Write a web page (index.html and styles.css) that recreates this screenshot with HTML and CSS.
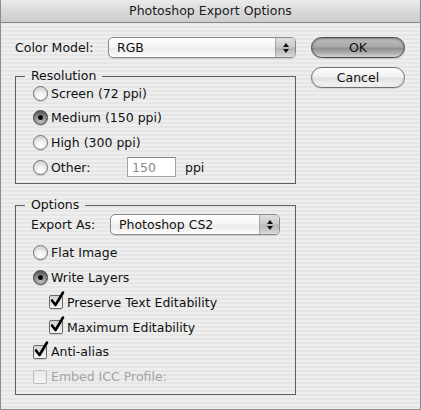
FILE: index.html
```html
<!DOCTYPE html>
<html>
<head>
<meta charset="utf-8">
<title>Photoshop Export Options</title>
<link rel="stylesheet" href="styles.css">
</head>
<body>
<div class="window">
  <div class="titlebar">Photoshop Export Options</div>
  <div class="content">
    <div class="main">
      <div class="model-row">
        <span class="label model-label">Color Model:</span>
        <div class="popup model-popup">
          <span class="popup-text">RGB</span>
          <span class="arrows"><svg width="8" height="12" viewBox="0 0 8 12"><path d="M4 1 L7 5 L1 5 Z M4 11 L7 7 L1 7 Z" fill="#111"/></svg></span>
        </div>
      </div>

      <fieldset class="group res-group">
        <legend class="legend">Resolution</legend>
        <div class="rows res-rows">
          <div class="row"><span class="radio"></span><span class="txt">Screen (72 ppi)</span></div>
          <div class="row"><span class="radio on"></span><span class="txt">Medium (150 ppi)</span></div>
          <div class="row"><span class="radio"></span><span class="txt">High (300 ppi)</span></div>
          <div class="row"><span class="radio"></span><span class="txt other-label">Other:</span><span class="field">150</span><span class="ppi">ppi</span></div>
        </div>
      </fieldset>

      <fieldset class="group opt-group">
        <legend class="legend">Options</legend>
        <div class="export-row">
          <span class="label export-label">Export As:</span>
          <div class="popup export-popup">
            <span class="popup-text">Photoshop CS2</span>
            <span class="arrows"><svg width="8" height="12" viewBox="0 0 8 12"><path d="M4 1 L7 5 L1 5 Z M4 11 L7 7 L1 7 Z" fill="#111"/></svg></span>
          </div>
        </div>
        <div class="rows opt-rows">
          <div class="row"><span class="radio"></span><span class="txt">Flat Image</span></div>
          <div class="row"><span class="radio on"></span><span class="txt">Write Layers</span></div>
          <div class="row indent"><span class="cb"><svg class="check" viewBox="0 0 16 18"><path d="M3 9.5 L6.5 14 L14 1.5" stroke="#000" stroke-width="2.6" fill="none" stroke-linecap="round" stroke-linejoin="round"/></svg></span><span class="txt cbt">Preserve Text Editability</span></div>
          <div class="row indent"><span class="cb"><svg class="check" viewBox="0 0 16 18"><path d="M3 9.5 L6.5 14 L14 1.5" stroke="#000" stroke-width="2.6" fill="none" stroke-linecap="round" stroke-linejoin="round"/></svg></span><span class="txt cbt">Maximum Editability</span></div>
          <div class="row"><span class="cb"><svg class="check" viewBox="0 0 16 18"><path d="M3 9.5 L6.5 14 L14 1.5" stroke="#000" stroke-width="2.6" fill="none" stroke-linecap="round" stroke-linejoin="round"/></svg></span><span class="txt cbt">Anti-alias</span></div>
          <div class="row disabled"><span class="cb off"></span><span class="txt cbt">Embed ICC Profile:</span></div>
        </div>
      </fieldset>
    </div>

    <div class="buttons">
      <div class="btn default">OK</div>
      <div class="btn">Cancel</div>
    </div>
  </div>
</div>
</body>
</html>
```

FILE: styles.css
```css
* { box-sizing: border-box; }
html, body { margin: 0; padding: 0; }
body {
  width: 421px;
  height: 410px;
  overflow: hidden;
  font-family: "DejaVu Sans", "Noto Sans", sans-serif;
  font-size: 12.5px;
  color: #111;
  background: #e8e8e8;
}
.window {
  width: 421px;
  height: 410px;
  display: flex;
  flex-direction: column;
  background: repeating-linear-gradient(to bottom, #eeeeee 0 2px, #e6e6e6 2px 4px);
  border: 1px solid #8c8c8c;
  border-top: none;
}
.titlebar {
  height: 23px;
  flex: none;
  background: linear-gradient(#ebebeb, #d9d9d9 50%, #cdcdcd);
  border-bottom: 1px solid #878787;
  display: flex;
  align-items: center;
  justify-content: center;
  color: #1a1a1a;
  padding-bottom: 1px;
}
.content {
  display: flex;
  padding: 14px 0 0 14px;
}
.main { width: 281px; flex: none; }
.buttons {
  display: flex;
  flex-direction: column;
  gap: 9px;
  margin-left: 15px;
  margin-top: 0;
}
.btn {
  width: 94px;
  height: 21px;
  border-radius: 11px;
  display: flex;
  align-items: center;
  justify-content: center;
  border: 1px solid #6e6e6e;
  background: linear-gradient(#fdfdfd, #f0f0f0 45%, #e0e0e0 55%, #f2f2f2 85%, #fbfbfb);
  box-shadow: inset 0 -2px 3px rgba(0,0,0,0.06), 0 1px 1px rgba(0,0,0,0.12);
  color: #111;
}
.btn.default {
  border: 1px solid #4a4a4a;
  background: linear-gradient(#bdbdbd, #a9a9a9 45%, #8f8f8f 55%, #b7b7b7 85%, #dadada);
  box-shadow: inset 0 1px 2px rgba(0,0,0,0.3), 0 1px 1px rgba(0,0,0,0.15);
}

.model-row, .export-row {
  display: flex;
  align-items: center;
  height: 21px;
}
.model-label { width: 93px; flex: none; }
.export-label { width: 79px; flex: none; }
.popup {
  height: 21px;
  border: 1px solid #8a8a8a;
  border-radius: 5px;
  display: flex;
  align-items: center;
  overflow: hidden;
  background: linear-gradient(#ffffff, #f6f6f6 45%, #ebebeb 55%, #f7f7f7 90%, #ffffff);
  box-shadow: 0 1px 1px rgba(0,0,0,0.12);
}
.model-popup { width: 188px; }
.export-popup { width: 170px; }
.popup-text { flex: 1; padding-left: 8px; }
.arrows {
  width: 20px;
  height: 100%;
  flex: none;
  display: flex;
  align-items: center;
  justify-content: center;
  border-left: 1px solid #a6a6a6;
  background: linear-gradient(#e0e0e0, #cbcbcb 45%, #b6b6b6 55%, #d0d0d0 90%, #e2e2e2);
}

.group {
  margin: 0;
  min-width: 0;
  padding: 0;
  border: 1px solid #5e5e5e;
}
.res-group { margin-top: 11px; padding-bottom: 6px; }
.opt-group { margin-top: 14px; padding-bottom: 7px; }
.legend {
  margin-left: 9px;
  padding: 0 6px;
  line-height: 14px;
}
.rows { display: flex; flex-direction: column; }
.res-rows { gap: 4.7px; padding-left: 17px; }
.export-row { padding-left: 15px; margin-top: 2px; }
.opt-rows { gap: 4.8px; padding-left: 17px; margin-top: 7.7px; }
.row {
  height: 20px;
  display: flex;
  align-items: center;
}
.row.indent { padding-left: 16px; }
.txt { margin-left: 3px; white-space: nowrap; }
.cbt { margin-left: 4px; }

.radio {
  width: 15px;
  height: 15px;
  flex: none;
  border-radius: 50%;
  border: 1px solid #707070;
  background: radial-gradient(circle at 50% 75%, #ffffff 0, #f3f3f3 35%, transparent 60%),
              linear-gradient(#d6d6d6, #e6e6e6 50%, #fafafa);
  box-shadow: 0 1px 1px rgba(0,0,0,0.15);
  position: relative;
}
.radio.on {
  border-color: #404040;
  background: radial-gradient(circle at 50% 80%, #bdbdbd 0, #9a9a9a 40%, transparent 65%),
              linear-gradient(#5e5e5e, #7b7b7b 50%, #a8a8a8);
}
.radio.on::after {
  content: "";
  position: absolute;
  left: 4px;
  top: 4px;
  width: 5px;
  height: 5px;
  border-radius: 50%;
  background: #0a0a0a;
}

.other-label { width: 76px; }
.field {
  width: 49px;
  height: 20px;
  flex: none;
  border: 1px solid #a4a4a4;
  border-top-color: #8a8a8a;
  background: #fff;
  color: #8a8a8a;
  padding-left: 4px;
  display: flex;
  align-items: center;
}
.ppi { margin-left: 9px; }

.cb {
  width: 14px;
  height: 14px;
  flex: none;
  position: relative;
  border: 1px solid #6a6a6a;
  border-radius: 2px;
  background: linear-gradient(#d4d4d4, #e4e4e4 50%, #f6f6f6);
  box-shadow: 0 1px 1px rgba(0,0,0,0.12);
}
.cb .check {
  position: absolute;
  left: -1px;
  top: -5px;
  width: 16px;
  height: 18px;
  overflow: visible;
}
.cb.off {
  border-color: #bdbdbd;
  background: linear-gradient(#e8e8e8, #efefef 50%, #f6f6f6);
  box-shadow: none;
}
.disabled .txt { color: #a3a3a3; }
```
